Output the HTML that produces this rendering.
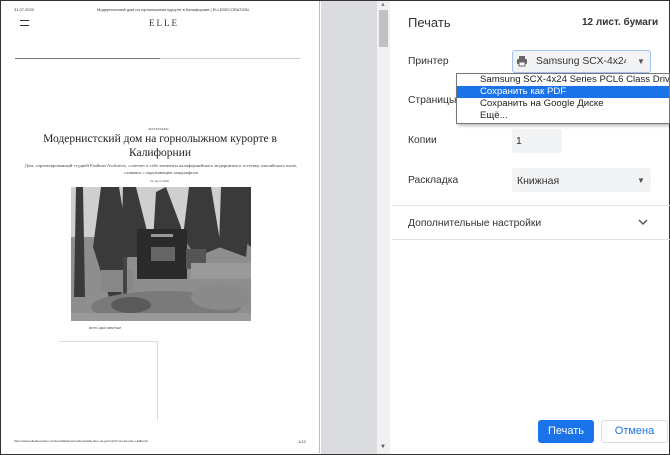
<!DOCTYPE html>
<html><head><meta charset="utf-8"><style>
*{margin:0;padding:0;box-sizing:border-box}
body{width:670px;height:455px;overflow:hidden;background:#fff;font-family:"Liberation Sans",sans-serif;position:relative}
.a{position:absolute}
.serif{font-family:"Liberation Serif",serif}
.lbl{position:absolute;left:408px;font-size:10.3px;color:#333}
.box{position:absolute;background:#f1f3f4;border-radius:3px;font-size:10.5px;color:#333}
</style></head><body>
<div class="a" style="left:0;top:0;width:670px;height:455px;border:1px solid #333"></div>
<div class="a" style="left:1px;top:1px;width:319px;height:452px;background:#fff;border-right:1px solid #bbb"></div>
<div class="a" style="left:14px;top:7px;font-size:4px;color:#333">31.07.2020</div>
<div class="a" style="left:97px;top:7px;font-size:4px;color:#333">Модернистский дом на горнолыжном курорте в Калифорнии | ELLEDECORATION</div>
<div class="a" style="left:20px;top:20px;width:9px;height:1px;background:#333"></div>
<div class="a" style="left:20px;top:25px;width:9px;height:1px;background:#333"></div>
<div class="a serif" style="left:149px;top:18px;font-size:9px;letter-spacing:2px;color:#333">ELLE</div>
<div class="a" style="left:15px;top:58px;width:285px;height:1px;background:#ccc"></div>
<div class="a" style="left:15px;top:58px;width:145px;height:1px;background:#777"></div>
<div class="a" style="left:148px;top:127px;font-size:3px;color:#555">ЭКСТЕРЬЕРЫ</div>
<div class="a serif" style="left:40px;top:132px;width:240px;text-align:center;font-size:11.5px;line-height:14px;color:#222">Модернистский дом на горнолыжном курорте в Калифорнии</div>
<div class="a serif" style="left:22px;top:162px;width:278px;text-align:center;font-size:4.6px;line-height:7px;color:#444">Дом, спроектированный студией Faulkner Architects, сочетает в себе элементы калифорнийского модернизма и эстетику альпийского шале, сливаясь с окружающим ландшафтом</div>
<div class="a" style="left:150px;top:179px;font-size:3px;color:#555">31 июля 2020</div>
<svg class="a" style="left:71px;top:187px" width="180" height="134" viewBox="0 0 180 134">
<rect width="180" height="134" fill="#8e8e8e"/>
<rect width="180" height="50" fill="#cfcfcf"/>
<g fill="#3a3a3a">
<polygon points="5,0 12,0 14,110 3,110"/>
<polygon points="30,0 48,0 58,60 50,110 38,110 22,60"/>
<polygon points="52,0 65,0 75,40 80,70 50,70"/>
<polygon points="85,5 95,0 110,40 110,55 82,55"/>
<polygon points="118,0 140,0 150,60 125,70 112,50"/>
<polygon points="150,0 165,0 178,40 175,70 148,60"/>
<polygon points="165,0 180,0 180,60 168,50"/>
</g>
<rect x="66" y="42" width="50" height="50" fill="#2a2a2a"/>
<rect x="80" y="47" width="22" height="3" fill="#999"/>
<rect x="80" y="60" width="24" height="14" fill="#666"/>
<rect x="115" y="62" width="20" height="20" fill="#555"/>
<rect x="120" y="76" width="60" height="16" fill="#9a9a9a"/>
<rect x="30" y="83" width="32" height="22" fill="#888"/>
<rect x="52" y="70" width="4" height="42" fill="#444"/>
<ellipse cx="95" cy="120" rx="75" ry="16" fill="#7a7a7a"/>
<ellipse cx="150" cy="110" rx="30" ry="13" fill="#8a8a8a"/>
<ellipse cx="60" cy="118" rx="20" ry="8" fill="#5a5a5a"/>
<rect y="126" width="180" height="8" fill="#999"/>
</svg>
<div class="a" style="left:89px;top:326px;font-size:3px;color:#333">ФОТО: ДЖО ФЛЕТЧЕР</div>
<div class="a" style="left:59px;top:341px;width:99px;height:80px;border-top:1px solid #ddd;border-right:1px solid #ddd"></div>
<div class="a" style="left:14px;top:439px;font-size:3px;color:#333">https://www.elledecoration.ru/interior/Ekterior/modernistskij-dom-na-gornolyzhnom-kurorte-v-kalifornii</div>
<div class="a" style="left:298px;top:439px;font-size:4px;color:#333">1/12</div>
<div class="a" style="left:321px;top:1px;width:56px;height:453px;background:#dadcdf"></div>
<div class="a" style="left:377px;top:1px;width:13px;height:453px;background:#f1f1f1"></div>
<div class="a" style="left:379px;top:10px;width:9px;height:37px;background:#c1c1c1"></div>
<div class="a" style="left:380px;top:2px;font-size:6px;color:#888">▲</div>
<div class="a" style="left:380px;top:444px;font-size:6px;color:#555">▼</div>
<div class="a" style="left:408px;top:15px;font-size:13px;color:#333">Печать</div>
<div class="a" style="left:582px;top:17px;font-size:10px;color:#333;font-weight:bold">12 лист. бумаги</div>
<div class="lbl" style="top:56px">Принтер</div>
<div class="a" style="left:512px;top:50px;width:139px;height:23px;border:1px solid #a8c4f0;border-radius:3px;background:#f1f3f4"></div>
<svg class="a" style="left:516px;top:55px" width="12" height="12" viewBox="0 0 12 12"><rect x="3" y="1" width="6" height="3" fill="#666"/><rect x="1" y="4" width="10" height="5" rx="1" fill="#666"/><rect x="3" y="7" width="6" height="4" fill="#fff" stroke="#666"/></svg>
<div class="a" style="left:536px;top:56px;font-size:10.3px;color:#333;width:90px;overflow:hidden;white-space:nowrap">Samsung SCX-4x24 Series</div>
<div class="a" style="left:637px;top:57px;font-size:8px;color:#555">▼</div>
<div class="lbl" style="top:95px">Страницы</div>
<div class="lbl" style="top:135px">Копии</div>
<div class="box" style="left:512px;top:129px;width:50px;height:24px;padding:6px 4px">1</div>
<div class="lbl" style="top:175px">Раскладка</div>
<div class="box" style="left:512px;top:168px;width:139px;height:24px;padding:7px 5px">Книжная</div>
<div class="a" style="left:637px;top:176px;font-size:8px;color:#555">▼</div>
<div class="a" style="left:392px;top:205px;width:278px;height:1px;background:#e3e3e3"></div>
<div class="lbl" style="top:218px">Дополнительные настройки</div>
<svg class="a" style="left:638px;top:219px" width="10" height="7" viewBox="0 0 10 7"><path d="M1 1 L5 5 L9 1" fill="none" stroke="#555" stroke-width="1.5"/></svg>
<div class="a" style="left:392px;top:239px;width:278px;height:1px;background:#e3e3e3"></div>
<div class="a" style="left:456px;top:73px;width:214px;height:51px;background:#fff;border:1px solid #777;box-shadow:2px 2px 3px rgba(0,0,0,.25);font-size:9.6px;color:#222">
<div style="height:12px;line-height:12px;padding-left:23px;white-space:nowrap">Samsung SCX-4x24 Series PCL6 Class Driver</div>
<div style="height:12px;line-height:12px;padding-left:23px;background:#1a73e8;color:#fff">Сохранить как PDF</div>
<div style="height:12px;line-height:12px;padding-left:23px">Сохранить на Google Диске</div>
<div style="height:12px;line-height:12px;padding-left:23px">Ещё...</div>
</div>
<div class="a" style="left:538px;top:420px;width:56px;height:23px;background:#1a73e8;border-radius:3px;color:#fff;font-size:11px;text-align:center;line-height:23px">Печать</div>
<div class="a" style="left:601px;top:420px;width:67px;height:23px;border:1px solid #dadce0;border-radius:3px;color:#1a73e8;font-size:11px;text-align:center;line-height:21px">Отмена</div>
</body></html>
